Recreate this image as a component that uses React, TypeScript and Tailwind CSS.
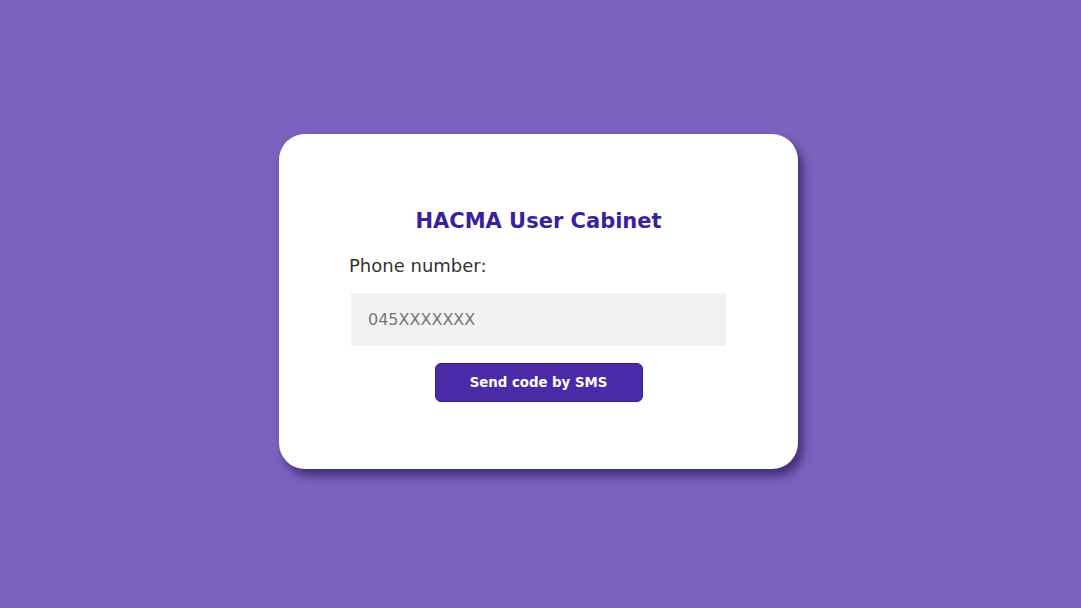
export default function App() {
  return (
    <div className="flex h-[608px] w-full items-center justify-center bg-[#7b62be] pr-[4px] pb-[5px] font-['DejaVu_Sans',Verdana,sans-serif]">
      <div className="flex h-[335px] w-[519px] flex-col items-center rounded-[26px] bg-white pt-[75px] shadow-[5px_7px_10px_rgba(20,5,60,0.55)]">
        <h1 className="text-[21px] font-bold leading-6 text-[#3b1f9c]">HACMA User Cabinet</h1>
        <div className="mt-[22px] flex w-[379px] flex-col">
          <label className="text-[18px] leading-[22px] text-[#333]">Phone number:</label>
          <input
            type="text"
            placeholder="045XXXXXXX"
            className="mt-[16px] ml-[2px] h-[53px] w-[375px] bg-[#f2f2f2] px-[17px] text-[16px] text-[#333] outline-none placeholder:text-[#777]"
          />
        </div>
        <button className="mt-[17px] h-[39px] w-[208px] rounded-[6px] border border-[#3a1f94] bg-[#4a2aa6] text-[13.3px] font-bold text-white">
          Send code by SMS
        </button>
      </div>
    </div>
  );
}
